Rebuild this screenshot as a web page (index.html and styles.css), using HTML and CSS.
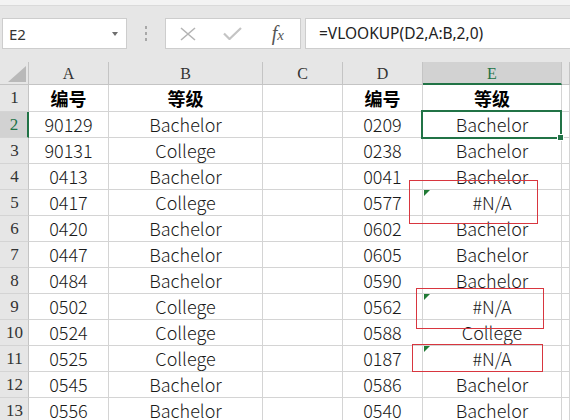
FILE: index.html
```html
<!DOCTYPE html>
<html lang="zh">
<head>
<meta charset="utf-8">
<title>VLOOKUP</title>
<link rel="stylesheet" href="styles.css">
</head>
<body>
<div class="topstrip"></div>
<div class="fbar">
  <div class="namebox"><span class="nbtext">E2</span><span class="caret"></span></div>
  <div class="grip"><i></i><i></i><i></i></div>
  <div class="fxbox">
    <span class="slot"><svg width="16" height="14" viewBox="0 0 16 14"><path d="M1 1L15 13M15 1L1 13" stroke="#b4b4b4" stroke-width="1.6" fill="none"/></svg></span>
    <span class="slot"><svg width="19" height="13" viewBox="0 0 19 13"><path d="M1 6.5L6.5 12L18 1" stroke="#c4c4c4" stroke-width="2.2" fill="none"/></svg></span>
    <span class="slot fx">f<small>x</small></span>
  </div>
  <div class="ftext">=VLOOKUP(D2,A:B,2,0)</div>
</div>
<div class="sheet">
  <div class="cn"><span class="tri"></span></div>
  <div class="h">A</div><div class="h">B</div><div class="h">C</div><div class="h">D</div><div class="h sel">E</div><div class="h"></div>

  <div class="r">1</div><div class="c t">编号</div><div class="c t">等级</div><div class="c"></div><div class="c t">编号</div><div class="c t">等级</div><div class="c"></div>
  <div class="r sel">2</div><div class="c">90129</div><div class="c">Bachelor</div><div class="c"></div><div class="c">0209</div><div class="c">Bachelor</div><div class="c"></div>
  <div class="r">3</div><div class="c">90131</div><div class="c">College</div><div class="c"></div><div class="c">0238</div><div class="c">Bachelor</div><div class="c"></div>
  <div class="r">4</div><div class="c">0413</div><div class="c">Bachelor</div><div class="c"></div><div class="c">0041</div><div class="c">Bachelor</div><div class="c"></div>
  <div class="r">5</div><div class="c">0417</div><div class="c">College</div><div class="c"></div><div class="c">0577</div><div class="c na">#N/A</div><div class="c"></div>
  <div class="r">6</div><div class="c">0420</div><div class="c">Bachelor</div><div class="c"></div><div class="c">0602</div><div class="c">Bachelor</div><div class="c"></div>
  <div class="r">7</div><div class="c">0447</div><div class="c">Bachelor</div><div class="c"></div><div class="c">0605</div><div class="c">Bachelor</div><div class="c"></div>
  <div class="r">8</div><div class="c">0484</div><div class="c">Bachelor</div><div class="c"></div><div class="c">0590</div><div class="c">Bachelor</div><div class="c"></div>
  <div class="r">9</div><div class="c">0502</div><div class="c">College</div><div class="c"></div><div class="c">0562</div><div class="c na">#N/A</div><div class="c"></div>
  <div class="r">10</div><div class="c">0524</div><div class="c">College</div><div class="c"></div><div class="c">0588</div><div class="c">College</div><div class="c"></div>
  <div class="r">11</div><div class="c">0525</div><div class="c">College</div><div class="c"></div><div class="c">0187</div><div class="c na">#N/A</div><div class="c"></div>
  <div class="r">12</div><div class="c">0545</div><div class="c">Bachelor</div><div class="c"></div><div class="c">0586</div><div class="c">Bachelor</div><div class="c"></div>
  <div class="r">13</div><div class="c">0556</div><div class="c">Bachelor</div><div class="c"></div><div class="c">0540</div><div class="c">Bachelor</div><div class="c"></div>

  <div class="selbox"><span class="handle"></span></div>
  <div class="mark m1"></div>
  <div class="mark m2"></div>
  <div class="mark m3"></div>
</div>
</body>
</html>
```

FILE: styles.css
```css
html, body {
  margin: 0;
  padding: 0;
}
body {
  width: 570px;
  height: 420px;
  overflow: hidden;
  background: #e6e6e6;
  font-family: "Noto Sans CJK SC", "Noto Sans", sans-serif;
}
.topstrip {
  height: 5px;
  background: #f3f3f3;
  border-bottom: 1px solid #dadada;
}
.fbar {
  height: 56px;
  box-sizing: border-box;
  padding-top: 12px;
  display: flex;
  align-items: flex-start;
  background: #e6e6e6;
}
.namebox {
  margin-left: 2px;
  width: 125px;
  height: 31px;
  box-sizing: border-box;
  background: #fff;
  border: 1px solid #cdcdcd;
  display: flex;
  align-items: center;
  justify-content: space-between;
  padding: 0 8px 0 6px;
}
.nbtext {
  font-family: "Noto Sans", sans-serif;
  font-size: 15px;
  color: #333;
}
.caret {
  width: 0;
  height: 0;
  border-left: 3.5px solid transparent;
  border-right: 3.5px solid transparent;
  border-top: 4px solid #6e6e6e;
}
.grip {
  width: 38px;
  height: 31px;
  display: flex;
  flex-direction: column;
  align-items: center;
  justify-content: center;
  gap: 3px;
}
.grip i {
  display: block;
  width: 2px;
  height: 3px;
  background: #a8a8a8;
}
.fxbox {
  width: 136px;
  height: 31px;
  box-sizing: border-box;
  background: #fff;
  border: 1px solid #cdcdcd;
  display: flex;
  align-items: center;
}
.slot {
  width: 45px;
  display: flex;
  justify-content: center;
  align-items: center;
}
.fx {
  font-family: "Liberation Serif", serif;
  font-style: italic;
  font-size: 20px;
  color: #555;
  padding-left: 1px;
}
.fx small {
  font-size: 15px;
  position: relative;
  top: 2px;
}
.ftext {
  margin-left: 4px;
  flex: 1;
  height: 31px;
  box-sizing: border-box;
  background: #fff;
  border: 1px solid #cdcdcd;
  border-right: none;
  padding-left: 13px;
  font-family: "Noto Sans", sans-serif;
  font-size: 15.5px;
  color: #222;
  line-height: 29px;
}
.sheet {
  position: relative;
  display: grid;
  grid-template-columns: 29px 80px 154px 80px 80px 139px 1fr;
  grid-template-rows: 23px 27px repeat(12, 26px);
  background: #fff;
}
.sheet > div {
  box-sizing: border-box;
}
.cn {
  position: relative;
  background: #e6e6e6;
  border-right: 1px solid #c4c4c4;
  border-bottom: 1px solid #c4c4c4;
}
.tri {
  position: absolute;
  right: 2px;
  bottom: 2px;
  width: 18px;
  height: 16px;
  background: #b9b9b9;
  clip-path: polygon(100% 0, 100% 100%, 0 100%);
}
.h {
  background: #e6e6e6;
  border-right: 1px solid #c4c4c4;
  border-bottom: 1px solid #c4c4c4;
  font-family: "Liberation Serif", serif;
  font-size: 16px;
  color: #333;
  display: flex;
  align-items: center;
  justify-content: center;
  padding-top: 2px;
}
.h.sel {
  background: #d2d2d2;
  border-bottom: 2px solid #217346;
  color: #217346;
}
.r {
  background: #e6e6e6;
  border-right: 1px solid #c4c4c4;
  border-bottom: 1px solid #d4d4d4;
  font-family: "Liberation Serif", serif;
  font-size: 17px;
  color: #333;
  display: flex;
  align-items: center;
  justify-content: center;
  padding-left: 1px;
}
.r.sel {
  background: #d2d2d2;
  border-right: 2px solid #217346;
  color: #217346;
}
.c {
  position: relative;
  border-right: 1px solid #d4d4d4;
  border-bottom: 1px solid #d4d4d4;
  font-weight: 300;
  font-size: 18px;
  color: #1a1a1a;
  display: flex;
  align-items: center;
  justify-content: center;
  padding-bottom: 2px;
  white-space: nowrap;
}
.c.t {
  font-weight: 700;
  font-size: 18px;
  color: #000;
  padding-bottom: 0;
}
.c.na::before {
  content: "";
  position: absolute;
  left: 1px;
  top: 0;
  width: 6px;
  height: 6px;
  background: #207a35;
  clip-path: polygon(0 0, 100% 0, 0 100%);
}
.selbox {
  position: absolute;
  left: 421px;
  top: 48px;
  width: 141px;
  height: 29px;
  box-sizing: border-box;
  border: 2px solid #217346;
}
.handle {
  position: absolute;
  right: -4px;
  bottom: -4px;
  width: 5px;
  height: 5px;
  background: #217346;
  border: 1px solid #fff;
}
.mark {
  position: absolute;
  box-sizing: border-box;
  border: 1px solid #d8363f;
}
.m1 {
  left: 409px;
  top: 118px;
  width: 129px;
  height: 44px;
}
.m2 {
  left: 416px;
  top: 226px;
  width: 128px;
  height: 41px;
}
.m3 {
  left: 412px;
  top: 282px;
  width: 131px;
  height: 28px;
}
```
